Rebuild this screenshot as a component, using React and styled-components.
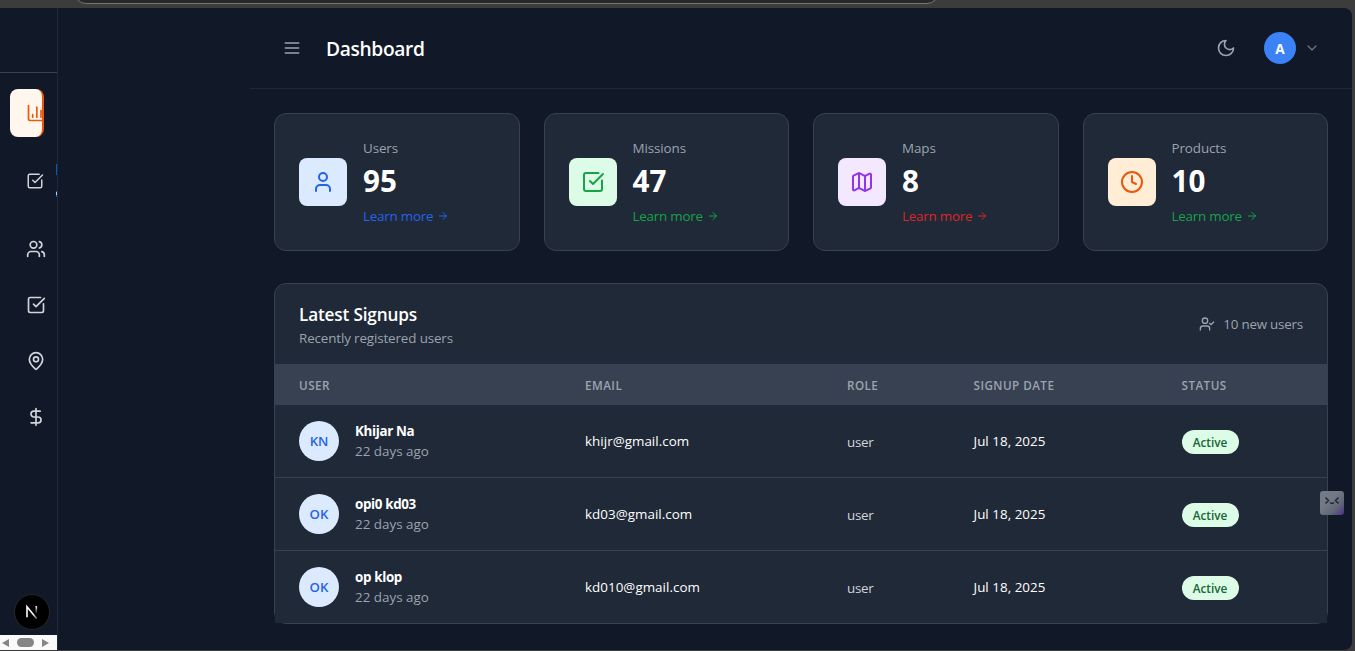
import React from "react";
import styled, { createGlobalStyle } from "styled-components";

const Global = createGlobalStyle`
  *, *::before, *::after { box-sizing: border-box; }
  body { margin: 0; background: #3c3c3c; overflow: hidden; }
  body, button { font-family: "Open Sans", "Noto Sans", sans-serif; }
`;

const paths = {
  chart: <><path d="M3 3v16a2 2 0 0 0 2 2h16" /><path d="M18 17V9" /><path d="M13 17V5" /><path d="M8 17v-3" /></>,
  check: <><path d="M21 10.5V19a2 2 0 0 1-2 2H5a2 2 0 0 1-2-2V5a2 2 0 0 1 2-2h12.5" /><path d="m9 11 3 3L22 4" /></>,
  users: <><path d="M16 21v-2a4 4 0 0 0-4-4H6a4 4 0 0 0-4 4v2" /><circle cx="9" cy="7" r="4" /><path d="M22 21v-2a4 4 0 0 0-3-3.87" /><path d="M16 3.13a4 4 0 0 1 0 7.75" /></>,
  pin: <><path d="M20 10c0 4.993-5.539 10.193-7.399 11.799a1 1 0 0 1-1.202 0C9.539 20.193 4 14.993 4 10a8 8 0 0 1 16 0" /><circle cx="12" cy="10" r="3" /></>,
  dollar: <><path d="M12 2v20" /><path d="M17 5H9.5a3.5 3.5 0 0 0 0 7h5a3.5 3.5 0 0 1 0 7H6" /></>,
  menu: <><path d="M4 6h16" /><path d="M4 12h16" /><path d="M4 18h16" /></>,
  moon: <path d="M12 3a6 6 0 0 0 9 9 9 9 0 1 1-9-9Z" />,
  down: <path d="m6 9 6 6 6-6" />,
  user: <><path d="M19 21v-2a4 4 0 0 0-4-4H9a4 4 0 0 0-4 4v2" /><circle cx="12" cy="7" r="4" /></>,
  map: <><path d="M14.106 5.553a2 2 0 0 0 1.788 0l3.659-1.83A1 1 0 0 1 21 4.619v12.764a1 1 0 0 1-.553.894l-4.553 2.277a2 2 0 0 1-1.788 0l-4.212-2.106a2 2 0 0 0-1.788 0l-3.659 1.83A1 1 0 0 1 3 19.381V6.618a1 1 0 0 1 .553-.894l4.553-2.277a2 2 0 0 1 1.788 0z" /><path d="M15 5.764v15" /><path d="M9 3.236v15" /></>,
  clock: <><circle cx="12" cy="12" r="10" /><path d="M12 6v6l4 2" /></>,
  userCheck: <><path d="m16 11 2 2 4-4" /><path d="M16 21v-2a4 4 0 0 0-4-4H6a4 4 0 0 0-4 4v2" /><circle cx="9" cy="7" r="4" /></>,
  arrow: <><path d="M5 12h14" /><path d="m12 5 7 7-7 7" /></>,
};

const Svg = styled.svg`
  display: block;
  flex: none;
  fill: none;
  stroke: currentColor;
  stroke-width: 2;
  stroke-linecap: round;
  stroke-linejoin: round;
`;
const Icon = ({ name, size = 20 }) => (
  <Svg width={size} height={size} viewBox="0 0 24 24">{paths[name]}</Svg>
);

const Window = styled.div`
  width: 1355px;
  height: 651px;
  display: flex;
  flex-direction: column;
  background: #3c3c3c;
`;
const BrowserBar = styled.div`
  flex: none;
  height: 8px;
  padding-left: 74px;
  overflow: hidden;
`;
const AddressField = styled.div`
  width: 865px;
  height: 24px;
  margin-top: -20px;
  border: 1px solid #757575;
  border-radius: 12px;
  background: #282828;
`;
const Page = styled.div`
  display: flex;
  width: 1352px;
  height: 642px;
  background: #111827;
  border-radius: 0 8px 8px 0;
  overflow: hidden;
`;

const Sidebar = styled.aside`
  flex: none;
  width: 58px;
  display: flex;
  flex-direction: column;
  border-right: 1px solid #1f2937;
  color: #d1d5db;
  overflow: hidden;
`;
const SidebarTop = styled.div`
  flex: none;
  height: 65px;
  border-bottom: 1px solid #374151;
`;
const Nav = styled.nav`
  flex: 1;
  padding-top: 16px;
`;
const ActiveItem = styled.div`
  width: 34px;
  height: 48px;
  margin-left: 10px;
  padding: 14px 0 0 16px;
  border-radius: 8px;
  border-right: 2px solid #ea580c;
  background: #fff7ed;
  color: #ea580c;
  overflow: hidden;
`;
const SubItem = styled.div`
  display: flex;
  align-items: center;
  justify-content: space-between;
  height: 88px;
  padding-left: 26px;
`;
const BadgeEdge = styled.div`
  width: 1px;
  height: 34px;
  background: linear-gradient(#0b57b4 0 11px, transparent 11px 27px, #1762c4 27px 28px, #a5d0f5 28px 31px, #1762c4 31px 33px, transparent 33px);
`;
const NavItem = styled.div`
  display: flex;
  align-items: center;
  height: 48px;
  margin-bottom: 8px;
  padding-left: 26px;
`;
const DevBadge = styled.div`
  flex: none;
  width: 36px;
  height: 36px;
  margin: 0 0 5px 14px;
  border-radius: 50%;
  border: 1px solid #272727;
  background: #000;
`;
const ScrollTrack = styled.div`
  flex: none;
  height: 15px;
  display: flex;
  align-items: center;
  justify-content: space-between;
  padding: 0 8px 0 2px;
  background: #fafafa;
`;
const ScrollArrow = styled.i`
  border: solid transparent;
  border-width: 4.5px 0;
  ${(p) => (p.$left ? "border-right: 7px solid #858585;" : "border-left: 7px solid #858585;")}
`;
const ScrollThumb = styled.i`
  width: 17px;
  height: 9px;
  border-radius: 5px;
  background: #858585;
`;

const Main = styled.main`
  flex: 1;
  margin-left: 192px;
  min-width: 0;
`;
const Header = styled.header`
  height: 81px;
  display: flex;
  align-items: center;
  padding: 0 32px;
  border-bottom: 1px solid #1f2937;
  color: #9ca3af;
`;
const PageTitle = styled.h1`
  margin: 2px auto 0 24px;
  font-size: 19.2px;
  font-weight: 600;
  line-height: 28px;
  letter-spacing: -0.35px;
  color: #fff;
`;
const AccountAvatar = styled.div`
  width: 32px;
  height: 32px;
  margin: 0 8px 0 28px;
  display: grid;
  place-items: center;
  border-radius: 50%;
  background: #3b82f6;
  color: #fff;
  font-size: 13.6px;
  font-weight: 700;
`;
const Muted = styled.span`
  display: flex;
  color: ${(p) => p.$color || "#6b7280"};
`;

const Content = styled.div`
  padding: 24px 24px 0;
`;
const Stats = styled.section`
  display: grid;
  grid-template-columns: repeat(4, 1fr);
  gap: 24px;
`;
const StatCard = styled.article`
  height: 138px;
  display: flex;
  align-items: center;
  gap: 16px;
  padding: 24px;
  border: 1px solid #374151;
  border-radius: 12px;
  background: #1f2937;
`;
const IconTile = styled.div`
  width: 48px;
  height: 48px;
  display: grid;
  place-items: center;
  border-radius: 8px;
  background: ${(p) => p.$bg};
  color: ${(p) => p.$fg};
`;
const StatLabel = styled.div`
  font-size: 13.4px;
  line-height: 20px;
  letter-spacing: -0.1px;
  color: #9ca3af;
`;
const StatValue = styled.div`
  margin: 5px 0 7px;
  font-size: 29.6px;
  font-weight: 700;
  line-height: 36px;
  color: #fff;
`;
const StatLink = styled.div`
  display: flex;
  align-items: center;
  gap: 4px;
  font-size: 13.4px;
  line-height: 20px;
  letter-spacing: -0.23px;
  color: ${(p) => p.$color};
`;

const Panel = styled.section`
  height: 341px;
  margin-top: 32px;
  border: 1px solid #374151;
  border-radius: 12px;
  background: #1f2937;
`;
const PanelHeader = styled.div`
  height: 81px;
  display: flex;
  align-items: center;
  justify-content: space-between;
  padding: 0 24px;
  border-bottom: 1px solid #374151;
`;
const PanelTitle = styled.h2`
  margin: 0;
  padding-top: 2px;
  font-size: 17.2px;
  font-weight: 600;
  line-height: 26px;
  letter-spacing: -0.17px;
  color: #fff;
`;
const Secondary = styled.div`
  font-size: 13.4px;
  line-height: 20px;
  letter-spacing: ${(p) => (p.$tight ? "-0.13px" : "0")};
  color: #9ca3af;
`;
const NewUsers = styled.div`
  display: flex;
  align-items: center;
  gap: 8px;
  font-size: 13.4px;
  letter-spacing: -0.22px;
  color: #9ca3af;
`;
const gridColumns = "286px 262px 126.5px 208px 1fr";
const TableHead = styled.div`
  height: 40px;
  display: grid;
  grid-template-columns: ${gridColumns};
  align-items: center;
  padding-left: 24px;
  background: #374151;
  color: #9ca3af;
  font-size: 11.7px;
  font-weight: 600;
  letter-spacing: 0.45px;
`;
const Row = styled.div`
  height: 73px;
  display: grid;
  grid-template-columns: ${gridColumns};
  align-items: center;
  padding-left: 24px;
  background: #1f2937;
  border-bottom: 1px solid #374151;
  &:last-child { height: 72px; border-bottom: 0; }
`;
const UserCell = styled.div`
  display: flex;
  align-items: center;
  gap: 16px;
`;
const Initials = styled.div`
  width: 40px;
  height: 40px;
  display: grid;
  place-items: center;
  border-radius: 50%;
  background: #dbeafe;
  color: #2563eb;
  font-size: 13.2px;
  font-weight: 600;
`;
const Name = styled.div`
  font-size: 13.4px;
  font-weight: 700;
  line-height: 20px;
  letter-spacing: -0.35px;
  color: #fff;
`;
const Cell = styled.div`
  font-size: 13.4px;
  line-height: 20px;
  letter-spacing: 0.03px;
  color: #fff;
`;
const Role = styled(Cell)`
  padding-top: 2px;
  letter-spacing: -0.25px;
  color: #d1d5db;
`;
const Status = styled.span`
  width: 57px;
  height: 24px;
  margin-top: 2px;
  display: grid;
  place-items: center;
  border-radius: 12px;
  background: #dcfce7;
  color: #166534;
  font-size: 11.8px;
  font-weight: 600;
`;
const Assistant = styled.div`
  position: absolute;
  left: 1320px;
  top: 491px;
  width: 23.5px;
  height: 24px;
  border-radius: 3px;
  background: linear-gradient(135deg, #737985 0 40%, #626777 70%, #4f2f86);
`;

const stats = [
  { label: "Users", value: "95", icon: "user", bg: "#dbeafe", fg: "#2563eb", link: "#2563eb" },
  { label: "Missions", value: "47", icon: "check", bg: "#dcfce7", fg: "#16a34a", link: "#16a34a" },
  { label: "Maps", value: "8", icon: "map", bg: "#f3e8ff", fg: "#9333ea", link: "#dc2626" },
  { label: "Products", value: "10", icon: "clock", bg: "#ffedd5", fg: "#ea580c", link: "#16a34a" },
];
const signups = [
  { initials: "KN", name: "Khijar Na", email: "khijr@gmail.com" },
  { initials: "OK", name: "opi0 kd03", email: "kd03@gmail.com" },
  { initials: "OK", name: "op klop", email: "kd010@gmail.com" },
];

export default function App() {
  return (
    <Window>
      <Global />
      <BrowserBar><AddressField /></BrowserBar>
      <Page>
        <Sidebar>
          <SidebarTop />
          <Nav>
            <ActiveItem><Icon name="chart" /></ActiveItem>
            <SubItem><Icon name="check" size={18} /><BadgeEdge /></SubItem>
            {["users", "check", "pin", "dollar"].map((n) => (
              <NavItem key={n}><Icon name={n} /></NavItem>
            ))}
          </Nav>
          <DevBadge>
            <svg width="34" height="34" viewBox="0 0 34 34" fill="none" strokeWidth="1.6">
              <defs>
                <linearGradient id="leg" x1="0" y1="11" x2="0" y2="21" gradientUnits="userSpaceOnUse">
                  <stop offset="0" stopColor="#fff" /><stop offset="0.8" stopColor="#fff" stopOpacity="0" />
                </linearGradient>
                <linearGradient id="slant" x1="17" y1="16" x2="23" y2="24" gradientUnits="userSpaceOnUse">
                  <stop offset="0.3" stopColor="#fff" /><stop offset="1" stopColor="#fff" stopOpacity="0.2" />
                </linearGradient>
              </defs>
              <path d="M12 22.2V11.8l9.8 12" stroke="url(#slant)" />
              <path d="M21.3 11v10.5" stroke="url(#leg)" />
            </svg>
          </DevBadge>
          <ScrollTrack><ScrollArrow $left /><ScrollThumb /><ScrollArrow /></ScrollTrack>
        </Sidebar>
        <Main>
          <Header>
            <Icon name="menu" />
            <PageTitle>Dashboard</PageTitle>
            <Icon name="moon" />
            <AccountAvatar>A</AccountAvatar>
            <Muted><Icon name="down" size={16} /></Muted>
          </Header>
          <Content>
            <Stats>
              {stats.map((s) => (
                <StatCard key={s.label}>
                  <IconTile $bg={s.bg} $fg={s.fg}><Icon name={s.icon} size={24} /></IconTile>
                  <div>
                    <StatLabel>{s.label}</StatLabel>
                    <StatValue>{s.value}</StatValue>
                    <StatLink $color={s.link}>Learn more<Icon name="arrow" size={12} /></StatLink>
                  </div>
                </StatCard>
              ))}
            </Stats>
            <Panel>
              <PanelHeader>
                <div>
                  <PanelTitle>Latest Signups</PanelTitle>
                  <Secondary $tight>Recently registered users</Secondary>
                </div>
                <NewUsers><Icon name="userCheck" size={16} />10 new users</NewUsers>
              </PanelHeader>
              <TableHead>
                <span>USER</span><span>EMAIL</span><span>ROLE</span><span>SIGNUP DATE</span><span>STATUS</span>
              </TableHead>
              <div>
                {signups.map((u) => (
                  <Row key={u.email}>
                    <UserCell>
                      <Initials>{u.initials}</Initials>
                      <div><Name>{u.name}</Name><Secondary>22 days ago</Secondary></div>
                    </UserCell>
                    <Cell>{u.email}</Cell>
                    <Role>user</Role>
                    <Cell>Jul 18, 2025</Cell>
                    <Status>Active</Status>
                  </Row>
                ))}
              </div>
            </Panel>
          </Content>
        </Main>
      </Page>
      <Assistant>
        <svg width="24" height="24" viewBox="0 0 24 24" fill="none" stroke="#1f2937" strokeWidth="1.5">
          <path d="m5.500 6.500 3 3-3 3M18.500 6.500l-3 3 3 3M10 11.500q2 1.800 4 0" />
        </svg>
      </Assistant>
    </Window>
  );
}
